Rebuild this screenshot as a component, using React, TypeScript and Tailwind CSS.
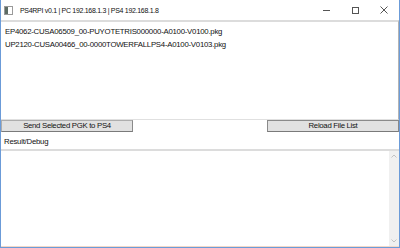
const files = [
  "EP4062-CUSA06509_00-PUYOTETRIS000000-A0100-V0100.pkg",
  "UP2120-CUSA00466_00-0000TOWERFALLPS4-A0100-V0103.pkg",
];

const App = () => {
  return (
    <div className="w-[400px] h-[248px] bg-white border-x border-b border-[#6b9bd8] flex flex-col font-['Liberation_Sans',Arial,sans-serif] text-[#111] overflow-hidden">
      {/* title bar */}
      <div className="h-[20px] flex items-center shrink-0">
        <div className="ml-[3px] w-[9px] h-[9px] border border-[#9a9a9a] bg-white flex">
          <div className="w-[3px] h-full bg-[#5c6b63]" />
        </div>
        <span className="ml-[7px] text-[7px] tracking-[-0.3px] text-[#111] leading-none">
          PS4RPI v0.1 | PC 192.168.1.3 | PS4 192.168.1.8
        </span>
        <div className="ml-auto flex items-center h-full">
          <div className="w-[30px] flex justify-center">
            <div className="w-[7px] h-px bg-[#555]" />
          </div>
          <div className="w-[28px] flex justify-center">
            <div className="w-[7px] h-[7px] border border-[#555]" />
          </div>
          <div className="w-[30px] flex justify-center">
            <svg width="8" height="8" viewBox="0 0 8 8">
              <path d="M0.5 0.5L7.5 7.5M7.5 0.5L0.5 7.5" stroke="#555" strokeWidth="1" />
            </svg>
          </div>
        </div>
      </div>

      {/* file list */}
      <div className="h-[100px] shrink-0 border-t-2 border-[#dcdcdc] border-r border-r-[#b4b4b4] border-b border-b-[#e0e0e0] pt-[4px] pl-[4px] text-[7.8px] tracking-[-0.25px] leading-[12.5px]">
        {files.map((f) => (
          <div key={f}>{f}</div>
        ))}
      </div>

      {/* buttons */}
      <div className="h-[12px] shrink-0 flex justify-between text-[7.8px] tracking-[-0.3px] leading-none">
        <button className="w-[132px] h-full bg-[#e1e1e1] border border-[#adadad] border-b-[#7a7a7a] border-r-[#8a8a8a] flex items-center justify-center text-[#111]">
          Send Selected PGK to PS4
        </button>
        <button className="w-[132px] h-full bg-[#e1e1e1] border border-[#8a8a8a] border-b-[#7a7a7a] flex items-center justify-center text-[#111]">
          Reload File List
        </button>
      </div>

      {/* label */}
      <div className="h-[17px] shrink-0 flex items-center pt-[3px] pl-[3px] text-[7.8px] tracking-[-0.25px] text-[#111]">
        Result/Debug
      </div>

      {/* debug output */}
      <div className="flex-1 border-t-2 border-[#dcdcdc] flex">
        <div className="flex-1" />
        <div className="w-[10px] bg-[#f0f0f0] flex flex-col justify-between items-center py-[3px]">
          <svg width="6" height="4" viewBox="0 0 6 4">
            <path d="M0.5 3.5L3 1L5.5 3.5" stroke="#c2c2c2" fill="none" />
          </svg>
          <svg width="6" height="4" viewBox="0 0 6 4">
            <path d="M0.5 0.5L3 3L5.5 0.5" stroke="#c2c2c2" fill="none" />
          </svg>
        </div>
      </div>
      <div className="h-[1px] bg-[#f3d8c8] shrink-0" />
    </div>
  );
};

export default App;
